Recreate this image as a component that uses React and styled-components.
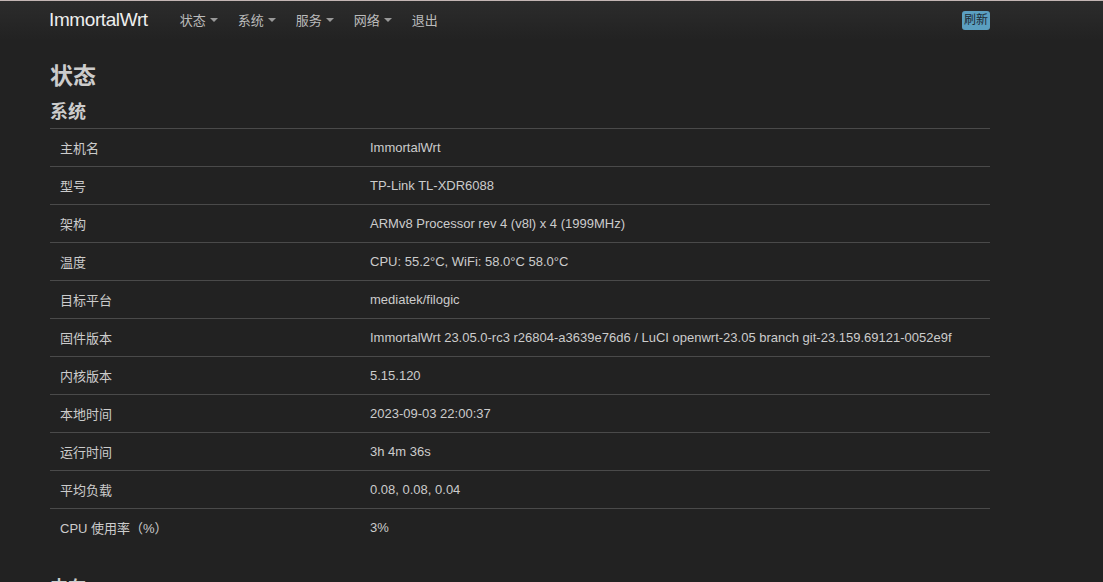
import React from 'react';
import styled, { createGlobalStyle } from 'styled-components';

const GlobalStyle = createGlobalStyle`
  html, body {
    margin: 0;
    padding: 0;
    background: #222;
    color: #ccc;
    font-family: "Liberation Sans", "Noto Sans CJK SC", sans-serif;
    font-size: 13px;
  }
`;

const Navbar = styled.nav`
  height: 40px;
  border-top: 1px solid #c4b6b4;
  box-sizing: border-box;
  background: linear-gradient(to bottom, #2c2c2c, #222);
`;

const NavInner = styled.div`
  width: 941px;
  margin-left: 49px;
  height: 100%;
  display: flex;
  align-items: center;
`;

const Brand = styled.a`
  color: #eee;
  font-size: 19px;
  font-weight: 300;
  letter-spacing: -0.4px;
  margin-right: 32px;
  text-decoration: none;
  padding-bottom: 2px;
`;

const Menu = styled.ul`
  display: flex;
  list-style: none;
  margin: 0;
  padding: 0;
  gap: 20px;
  flex: 1;
`;

const MenuItem = styled.li`
  color: #bbb;
  font-size: 13px;
  display: flex;
  align-items: center;
  padding-bottom: 2px;
`;

const Caret = styled.span`
  display: inline-block;
  margin-left: 4px;
  width: 0;
  height: 0;
  border-left: 4px solid transparent;
  border-right: 4px solid transparent;
  border-top: 4px solid #999;
`;

const Badge = styled.span`
  background: #5b9fc0;
  color: #1d2a33;
  font-size: 12px;
  border-radius: 3px;
  padding: 2px 2px;
  line-height: 15px;
`;

const Main = styled.main`
  width: 940px;
  margin-left: 50px;
`;

const Title = styled.h2`
  margin: 21px 0 0;
  font-size: 23px;
  line-height: 30px;
  font-weight: bold;
  color: #ccc;
`;

const Section = styled.h3`
  margin: ${({ $top }) => $top}px 0 0;
  font-size: 18px;
  line-height: 28px;
  font-weight: bold;
  color: #ccc;
  padding-bottom: 2px;
`;

const Table = styled.div`
  border-top: 1px solid #4a4a4a;
`;

const Row = styled.div`
  display: grid;
  grid-template-columns: 310px 1fr;
  height: 37px;
  align-items: center;
  border-bottom: 1px solid #4a4a4a;
  padding-left: 10px;
  padding-bottom: 1px;
  box-sizing: border-box;
  height: 38px;
  &:last-child {
    border-bottom: none;
  }
`;

const Cell = styled.div`
  color: #ccc;
  white-space: nowrap;
`;

const rows = [
  ['主机名', 'ImmortalWrt'],
  ['型号', 'TP-Link TL-XDR6088'],
  ['架构', 'ARMv8 Processor rev 4 (v8l) x 4 (1999MHz)'],
  ['温度', 'CPU: 55.2°C, WiFi: 58.0°C 58.0°C'],
  ['目标平台', 'mediatek/filogic'],
  ['固件版本', 'ImmortalWrt 23.05.0-rc3 r26804-a3639e76d6 / LuCI openwrt-23.05 branch git-23.159.69121-0052e9f'],
  ['内核版本', '5.15.120'],
  ['本地时间', '2023-09-03 22:00:37'],
  ['运行时间', '3h 4m 36s'],
  ['平均负载', '0.08, 0.08, 0.04'],
  ['CPU 使用率（%）', '3%'],
];

const menus = [
  ['状态', true],
  ['系统', true],
  ['服务', true],
  ['网络', true],
  ['退出', false],
];

export default function App() {
  return (
    <>
      <GlobalStyle />
      <Navbar>
        <NavInner>
          <Brand href="#">ImmortalWrt</Brand>
          <Menu>
            {menus.map(([label, drop]) => (
              <MenuItem key={label}>
                {label}
                {drop && <Caret />}
              </MenuItem>
            ))}
          </Menu>
          <Badge>刷新</Badge>
        </NavInner>
      </Navbar>
      <Main>
        <Title>状态</Title>
        <Section $top={7}>系统</Section>
        <Table>
          {rows.map(([k, v]) => (
            <Row key={k}>
              <Cell>{k}</Cell>
              <Cell>{v}</Cell>
            </Row>
          ))}
        </Table>
        <Section $top={27}>内存</Section>
      </Main>
    </>
  );
}
